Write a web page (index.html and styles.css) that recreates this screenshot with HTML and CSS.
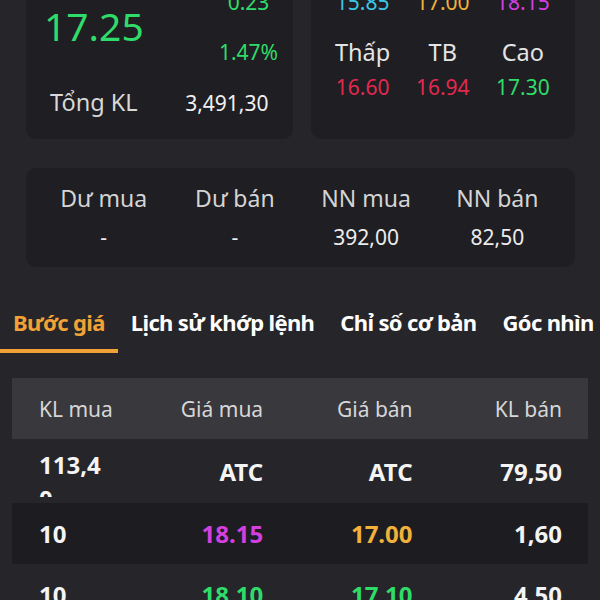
FILE: index.html
```html
<!DOCTYPE html>
<html lang="vi">
<head>
    <meta charset="UTF-8">
    <meta name="viewport" content="width=device-width, initial-scale=1.0">
    <title>Chi tiết mã</title>
    <link rel="stylesheet" href="styles.css">
</head>
<body>
    <div class="screen">
        <div class="summary">
            <div class="card price-card">
                <div class="price-top">
                    <div class="last-price up">17.25</div>
                    <div class="change up">
                        <div>0.23</div>
                        <div>1.47%</div>
                    </div>
                </div>
                <div class="volume">
                    <span class="label">Tổng KL</span>
                    <span class="value">3,491,30</span>
                </div>
            </div>

            <div class="card range-card">
                <div class="range-group">
                    <span class="label">Sàn</span>
                    <span class="label">TC</span>
                    <span class="label">Trần</span>
                    <span class="floor">15.85</span>
                    <span class="ref">17.00</span>
                    <span class="ceil">18.15</span>
                </div>
                <div class="range-group">
                    <span class="label">Thấp</span>
                    <span class="label">TB</span>
                    <span class="label">Cao</span>
                    <span class="down">16.60</span>
                    <span class="down">16.94</span>
                    <span class="up">17.30</span>
                </div>
            </div>
        </div>

        <div class="card flow-card">
            <span class="label">Dư mua</span>
            <span class="label">Dư bán</span>
            <span class="label">NN mua</span>
            <span class="label">NN bán</span>
            <span class="value">-</span>
            <span class="value">-</span>
            <span class="value">392,00</span>
            <span class="value">82,50</span>
        </div>

        <div class="tabs">
            <div class="tab active">Bước giá</div>
            <div class="tab">Lịch sử khớp lệnh</div>
            <div class="tab">Chỉ số cơ bản</div>
            <div class="tab">Góc nhìn</div>
        </div>

        <div class="book">
            <div class="book-head">
                <span class="left">KL mua</span>
                <span>Giá mua</span>
                <span>Giá bán</span>
                <span>KL bán</span>
            </div>
            <div class="book-row first">
                <span class="left qty">113,40</span>
                <span>ATC</span>
                <span>ATC</span>
                <span>79,50</span>
            </div>
            <div class="book-row alt">
                <span class="left">10</span>
                <span class="ceil">18.15</span>
                <span class="ref">17.00</span>
                <span>1,60</span>
            </div>
            <div class="book-row">
                <span class="left">10</span>
                <span class="up">18.10</span>
                <span class="up">17.10</span>
                <span>4,50</span>
            </div>
        </div>
    </div>
</body>
</html>
```

FILE: styles.css
```css
body {
    margin: 0;
    padding: 0;
    background-color: #26252a;
    color: #e6e6e6;
    font-family: "Noto Sans", "DejaVu Sans", sans-serif;
    overflow: hidden;
}
.screen {
    height: 600px;
    overflow: hidden;
}
.card {
    background-color: #1f1e23;
    border-radius: 10px;
}
.up { color: #2fdc6a; }
.down { color: #e2294f; }
.ref { color: #f2b23a; }
.ceil { color: #d43fe0; }
.floor { color: #3cc6e6; }

.summary {
    display: flex;
    gap: 18px;
    margin: -84px 25px 0 26px;
}
.price-card {
    flex: 1;
    padding: 71px 8px 21px 18px;
}
.price-top {
    display: flex;
    justify-content: space-between;
    align-items: flex-start;
}
.last-price {
    margin-top: 18px;
    font-size: 39px;
    line-height: 42px;
}
.change {
    width: 72px;
    display: flex;
    flex-direction: column;
    gap: 20px;
    text-align: center;
    font-size: 21px;
    line-height: 30px;
}
.volume {
    display: flex;
    justify-content: space-between;
    align-items: baseline;
    margin: 20px 16px 0 0;
    padding-left: 6px;
    font-size: 21px;
    line-height: 30px;
}
.volume .label {
    font-size: 23.5px;
    color: #d8d8d8;
}
.volume .value {
    color: #f0f0f0;
}

.range-card {
    flex: 1;
    padding: 36px 12px;
    display: flex;
    flex-direction: column;
    gap: 20px;
}
.range-group {
    display: grid;
    grid-template-columns: 1fr 1fr 1fr;
    row-gap: 5px;
    text-align: center;
    font-size: 21px;
    line-height: 30px;
}
.range-group .label {
    font-size: 23.5px;
    color: #e4e4e4;
}

.flow-card {
    margin: 29px 25px 0 26px;
    padding: 15px 12px;
    display: grid;
    grid-template-columns: repeat(4, 1fr);
    row-gap: 9px;
    text-align: center;
    font-size: 21px;
    line-height: 30px;
}
.flow-card .label {
    font-size: 23px;
    color: #d4d4d4;
}
.flow-card .value {
    color: #ececec;
}

.tabs {
    display: flex;
    margin-top: 40px;
    white-space: nowrap;
    overflow: hidden;
}
.tab {
    padding: 0 13px 12px;
    border-bottom: 4px solid transparent;
    font-size: 22px;
    font-weight: bold;
    letter-spacing: -0.65px;
    line-height: 30px;
    color: #ffffff;
}
.tab.active {
    color: #f0a236;
    border-bottom-color: #f0a236;
}

.book {
    margin: 25px 12px 0;
}
.book-head,
.book-row {
    display: grid;
    grid-template-columns: 1fr 2fr 2fr 2fr;
    align-items: center;
    padding: 0 26px 0 27px;
    text-align: right;
}
.book-head {
    height: 61px;
    background-color: #39383d;
    font-size: 21px;
    color: #d6d6d6;
}
.book-row {
    height: 61px;
    font-size: 24px;
    font-weight: bold;
    color: #f4f4f4;
}
.book-row.first {
    height: 64px;
    overflow: hidden;
}
.book-row.alt {
    background-color: #1d1c21;
}
.left {
    text-align: left;
}
.qty {
    align-self: flex-start;
    height: 49px;
    padding-top: 9px;
    overflow: hidden;
    line-height: 34px;
    word-break: break-all;
}
```
